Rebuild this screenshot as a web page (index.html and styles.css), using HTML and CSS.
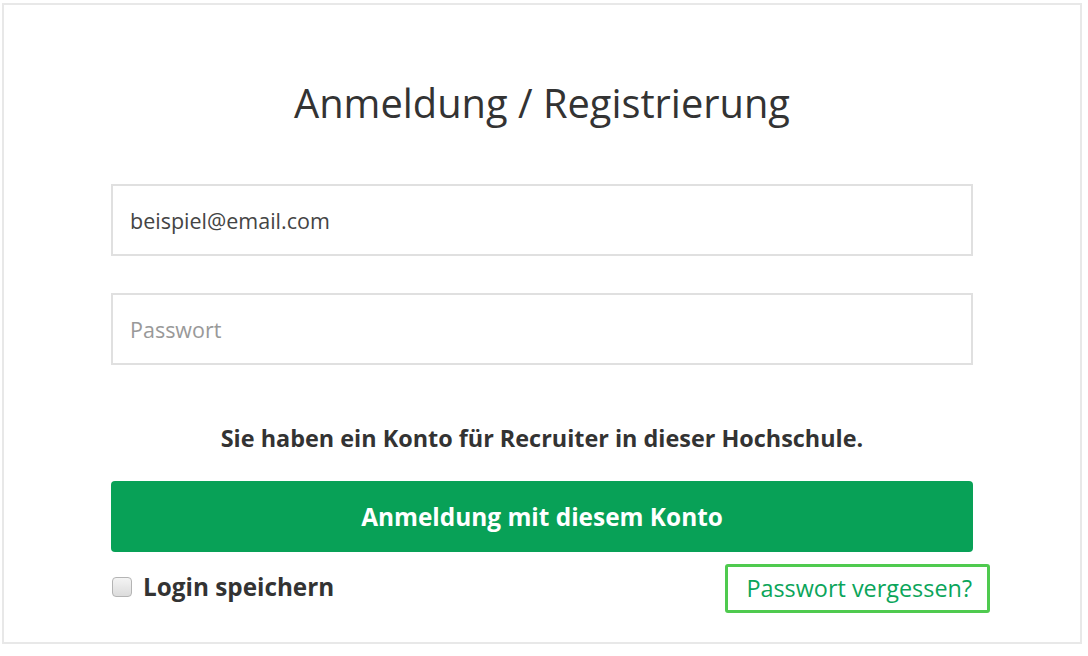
FILE: index.html
```html
<!DOCTYPE html>
<html lang="de">

<head>
    <meta charset="UTF-8">
    <meta name="viewport" content="width=device-width, initial-scale=1.0">
    <title>Anmeldung / Registrierung</title>
    <link rel="stylesheet" href="styles.css">
</head>

<body>
    <div class="login-panel">
        <h1>Anmeldung / Registrierung</h1>
        <form class="login-form">
            <input type="email" class="field" value="beispiel@email.com">
            <input type="password" class="field" placeholder="Passwort">
            <p class="account-note">Sie haben ein Konto für Recruiter in dieser Hochschule.</p>
            <button type="button" class="btn-login">Anmeldung mit diesem Konto</button>
            <div class="login-footer">
                <label class="remember">
                    <input type="checkbox">
                    <span>Login speichern</span>
                </label>
                <a href="#" class="forgot">Passwort vergessen?</a>
            </div>
        </form>
    </div>
</body>

</html>
```

FILE: styles.css
```css
body {
    margin: 0;
    padding: 3px 6px 0 2px;
    font-family: "Open Sans", Arial, sans-serif;
    color: #333;
    background: #fff;
}

.login-panel {
    border: 2px solid #e8e8e8;
    height: 641px;
    box-sizing: border-box;
    padding: 75px 107px 0;
}

h1 {
    margin: 0 0 58px;
    font-size: 39.8px;
    font-weight: 400;
    line-height: 46px;
    text-align: center;
    color: #333;
}

.login-form {
    display: flex;
    flex-direction: column;
}

.field {
    height: 72px;
    box-sizing: border-box;
    border: 2px solid #e0e0e0;
    padding: 0 17px;
    font-family: inherit;
    font-size: 21.5px;
    color: #444;
    outline: none;
}

.field + .field {
    margin-top: 37px;
}

.field::placeholder {
    color: #999;
}

.account-note {
    margin: 57px 0 27px;
    font-size: 23.4px;
    font-weight: 700;
    line-height: 32px;
    text-align: center;
    color: #333;
}

.btn-login {
    height: 71px;
    border: none;
    border-radius: 4px;
    background-color: #08a157;
    color: #fff;
    font-family: inherit;
    font-size: 24.4px;
    font-weight: 700;
}

.login-footer {
    display: flex;
    justify-content: space-between;
    align-items: center;
    margin-top: 12px;
}

.remember {
    display: flex;
    align-items: center;
    gap: 11px;
    margin-top: -4px;
    font-size: 24.3px;
    font-weight: 700;
    color: #333;
}

.remember input {
    appearance: none;
    width: 20px;
    height: 20px;
    margin: 0 0 0 1px;
    border: 1px solid #b4b4b4;
    border-radius: 4px;
    background: linear-gradient(#f4f4f4, #dcdcdc);
}

.forgot {
    margin-right: -17px;
    padding: 6px 15px 6px 18px;
    border: 3px solid #4fca4f;
    border-radius: 3px;
    font-size: 23.4px;
    line-height: 31px;
    color: #0ba55a;
    text-decoration: none;
}
```
